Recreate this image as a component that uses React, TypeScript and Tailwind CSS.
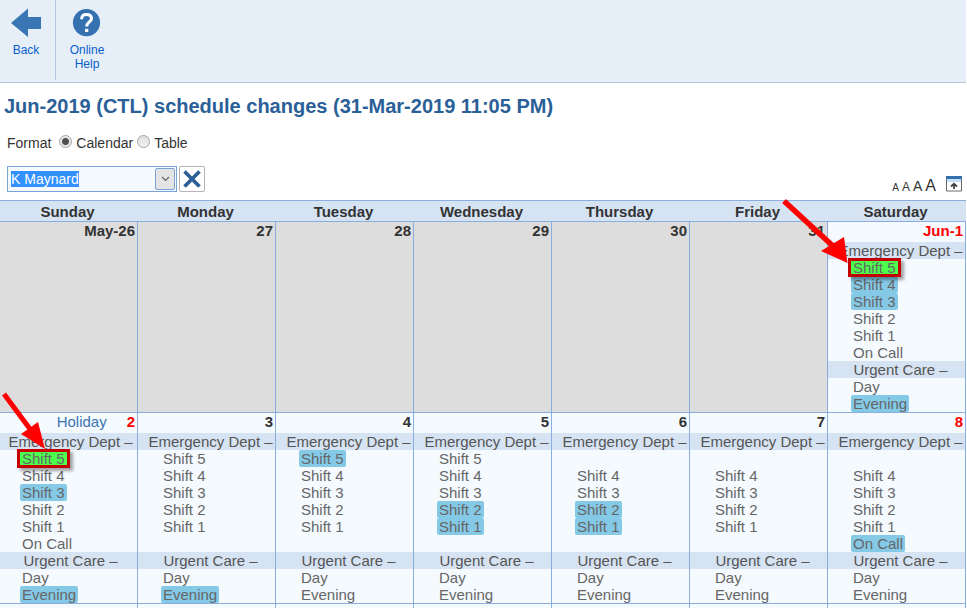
import { useState } from "react";
import { clsx } from "clsx";

type Shift = { name: string; mark?: "blue" | "green"; arrow?: "wide" | "narrow" };

type Day = {
  label: string;
  red?: boolean;
  holiday?: boolean;
  emergency?: Shift[];
  urgent?: Shift[];
};

const weekdays = ["Sunday", "Monday", "Tuesday", "Wednesday", "Thursday", "Friday", "Saturday"];

const emergencyNames = ["Shift 5", "Shift 4", "Shift 3", "Shift 2", "Shift 1", "On Call"];

// An empty name keeps the line so that the rows of a week stay level
function emergency(open: string[], changed: string[] = []): Shift[] {
  return emergencyNames.map((name) => ({
    name: open.includes(name) ? name : "",
    mark: changed.includes(name) ? "blue" : undefined,
  }));
}

function withArrow(shifts: Shift[], arrow: "wide" | "narrow"): Shift[] {
  return shifts.map((shift, index) => (index === 0 ? { ...shift, mark: "green", arrow } : shift));
}

function urgent(eveningChanged = false): Shift[] {
  return [{ name: "Day" }, { name: "Evening", mark: eveningChanged ? "blue" : undefined }];
}

const fiveShifts = emergencyNames.slice(0, 5);
const fourShifts = emergencyNames.slice(1, 5);

const weeks: Day[][] = [
  [
    { label: "May-26" },
    { label: "27" },
    { label: "28" },
    { label: "29" },
    { label: "30" },
    { label: "31" },
    {
      label: "Jun-1",
      red: true,
      emergency: withArrow(emergency(emergencyNames, ["Shift 4", "Shift 3"]), "wide"),
      urgent: urgent(true),
    },
  ],
  [
    {
      label: "2",
      red: true,
      holiday: true,
      emergency: withArrow(emergency(emergencyNames, ["Shift 3"]), "narrow"),
      urgent: urgent(true),
    },
    { label: "3", emergency: emergency(fiveShifts), urgent: urgent(true) },
    { label: "4", emergency: emergency(fiveShifts, ["Shift 5"]), urgent: urgent() },
    { label: "5", emergency: emergency(fiveShifts, ["Shift 2", "Shift 1"]), urgent: urgent() },
    { label: "6", emergency: emergency(fourShifts, ["Shift 2", "Shift 1"]), urgent: urgent() },
    { label: "7", emergency: emergency(fourShifts), urgent: urgent() },
    {
      label: "8",
      red: true,
      emergency: emergency([...fourShifts, "On Call"], ["On Call"]),
      urgent: urgent(),
    },
  ],
];

function Callout({ arrow }: { arrow: "wide" | "narrow" }) {
  return (
    <>
      <span className="absolute -inset-x-[3px] -inset-y-px z-10 border-3 border-[#c40000] shadow-[3px_3px_3px_rgba(0,0,0,0.35)]" />
      {arrow === "wide" ? (
        <svg className="absolute right-full bottom-full z-20 -mb-[5px] mr-[3px]" width="68" height="66" viewBox="0 0 68 66" aria-hidden="true">
          <path d="M4 3 L54 49" stroke="#ff0000" strokeWidth="5.5" />
          <path d="M64 39 L41 53 L67.5 65 Z" fill="#ff0000" />
        </svg>
      ) : (
        <svg className="absolute right-1/2 bottom-full z-20 -mr-0.5" width="44" height="60" viewBox="0 0 44 60" aria-hidden="true">
          <path d="M3 4 L29 39" stroke="#ff0000" strokeWidth="5" />
          <path d="M37 32 L20 44 L44 59 Z" fill="#ff0000" />
        </svg>
      )}
    </>
  );
}

function ShiftList({ shifts }: { shifts: Shift[] }) {
  return (
    <ul>
      {shifts.map((shift, index) => (
        <li key={index} className="flex h-[17px]">
          <span
            className={clsx(
              "relative rounded-xs px-0.5",
              shift.mark === "blue" && "bg-[#84c9e6]",
              shift.mark === "green" && "bg-[#4cff4c]"
            )}
          >
            {shift.name}
            {shift.arrow && <Callout arrow={shift.arrow} />}
          </span>
        </li>
      ))}
    </ul>
  );
}

function DayCell({ day, first }: { day: Day; first: boolean }) {
  const listPadding = first ? "pl-5" : "pl-[23px]";
  const titlePadding = first ? "pl-1" : "pl-2";

  return (
    <td className={clsx("border-r border-b border-[#8aaee0] p-0 align-top", day.emergency ? "bg-[#f5faff]" : "bg-[#dddddd]")}>
      <div className={clsx("flex h-5 items-start justify-end pr-0.5 font-bold", day.red ? "text-[#ff0000]" : "text-[#333333]")}>
        {day.holiday && <span className="mr-5 font-normal text-[#3b73af]">Holiday</span>}
        {day.label}
      </div>
      {day.emergency && day.urgent && (
        <div className="text-[#666666]">
          <h3 className={clsx("bg-[#d6e3f3] text-center whitespace-nowrap text-[#555555]", titlePadding)}>Emergency Dept –</h3>
          <div className={listPadding}>
            <ShiftList shifts={day.emergency} />
          </div>
          <h3 className={clsx("bg-[#d6e3f3] text-center whitespace-nowrap text-[#555555]", titlePadding)}>Urgent Care –</h3>
          <div className={listPadding}>
            <ShiftList shifts={day.urgent} />
          </div>
        </div>
      )}
    </td>
  );
}

export default function App() {
  const [format, setFormat] = useState("Calendar");
  const [person, setPerson] = useState("K Maynard");

  return (
    <div className="h-screen overflow-hidden bg-white pr-px font-['Liberation_Sans',Arial,sans-serif] text-[#333333]">
      {/* Toolbar */}
      <nav className="flex h-[83px] border-b border-[#b4c6de] bg-[#e6eef7] text-xs leading-[14px] text-[#0b5fcc]">
        <a href="#back" className="flex h-20 w-14 flex-col items-center border-r border-[#b4c6de] pt-2 pr-[3px]">
          <svg width="32" height="30" viewBox="0 0 32 30" aria-hidden="true">
            <path d="M1 15 L18 .5 V9 H31 V21 H18 V29 Z" fill="#3b76b4" />
          </svg>
          <span className="mt-[5px]">Back</span>
        </a>
        <a href="#help" className="flex w-[62px] flex-col items-center px-2 pt-2 text-center">
          <svg width="30" height="30" viewBox="0 0 30 30" aria-hidden="true">
            <circle cx="14.5" cy="14.6" r="13.6" fill="#3571b0" />
            <path d="M9.6 11.2 C9.6 7.6 11.7 6.4 14.5 6.4 C17.5 6.4 19.5 7.9 19.5 10.4 C19.5 14 14.7 14 14.7 18.6" fill="none" stroke="#fff" strokeWidth="3" />
            <path d="M13.1 20.8 H16.3 V24 H13.1 Z" fill="#fff" />
          </svg>
          <span className="mt-[5px]">Online Help</span>
        </a>
      </nav>

      <h1 className="px-1 pt-[11px] text-xl leading-6 font-bold text-[#2a5f98]">
        Jun-2019 (CTL) schedule changes (31-Mar-2019 11:05 PM)
      </h1>

      {/* Display format */}
      <fieldset className="mt-[17px] flex h-4 items-center px-[7px] text-sm">
        <span className="mr-2">Format</span>
        {["Calendar", "Table"].map((name) => (
          <label key={name} className="mr-1 flex items-center gap-1">
            <input
              type="radio"
              name="format"
              value={name}
              checked={format === name}
              onChange={() => setFormat(name)}
              className="mb-1 size-[13px] appearance-none rounded-full border border-[#a5a5a5] bg-linear-to-b from-[#e0e0e0] to-[#f2f2f2] checked:bg-[radial-gradient(circle,#505050_3px,#e8e8e8_4px)]"
            />
            {name}
          </label>
        ))}
      </fieldset>

      <div className="mt-[15px] flex h-[34px] items-start justify-between pr-1 pl-[7px]">
        <div className="flex gap-[2px]">
          <div className="flex h-[26px] w-[170px] border border-[#7ba3d8] bg-[#f5faff] p-px">
            <div className="flex min-w-0 flex-1 items-center pl-0.5">
              <input
                aria-label="Staff member"
                value={person}
                onChange={(event) => setPerson(event.target.value)}
                className="h-4 w-[68px] bg-[#3390ff] text-sm leading-4 text-white outline-none"
              />
            </div>
            <button aria-label="Show staff list" className="flex w-5 items-center justify-center rounded-xs border border-[#7ba3d8] bg-[#e4e4e4]">
              <svg width="9" height="6" viewBox="0 0 9 6" aria-hidden="true">
                <path d="M1 1 L4.5 4.5 L8 1" fill="none" stroke="#666" strokeWidth="1.2" />
              </svg>
            </button>
          </div>
          <button aria-label="Clear" className="flex h-[26px] w-[26px] items-center justify-center rounded-xs border border-[#b4b4b4] bg-white">
            <svg width="18" height="18" viewBox="0 0 18 18" aria-hidden="true">
              <path d="M1.5 1.5 L16.5 16.5 M16.5 1.5 L1.5 16.5" stroke="#2a5f98" strokeWidth="3.6" />
            </svg>
          </button>
        </div>

        <div className="flex h-8 items-end">
          <div className="flex items-baseline gap-[3px] leading-4">
            <button className="text-[10px]">A</button>
            <button className="text-xs">A</button>
            <button className="text-sm">A</button>
            <button className="text-base">A</button>
          </div>
          <button aria-label="Pop out" className="mb-1.5 ml-2.5">
            <svg width="16" height="16" viewBox="0 0 16 16" aria-hidden="true">
              <path d="M.5 .5 H15.5 V15 H.5 Z" fill="#fff" stroke="#6a6a6a" />
              <path d="M0 0 H16 V3 H0 Z" fill="#3571b0" />
              <path d="M1 3 H15 V6 H1 Z" fill="#c6e2fa" />
              <path d="M8 13 V8 M5 10.5 L8 7.8 L11 10.5" fill="none" stroke="#444" strokeWidth="1.8" />
            </svg>
          </button>
        </div>
      </div>

      {/* Month grid */}
      <table className="w-full table-fixed border-separate border-spacing-0 border-t border-[#8aaee0] text-[15px] leading-[17px]">
        <thead>
          <tr className="h-[21px]">
            {weekdays.map((weekday) => (
              <th key={weekday} className="border-b border-[#8aaee0] bg-[#d6e3f3] p-0 pr-[3px]">
                {weekday}
              </th>
            ))}
          </tr>
        </thead>
        <tbody>
          {weeks.map((week, row) => (
            <tr key={row}>
              {week.map((day, column) => (
                <DayCell key={day.label} day={day} first={column === 0} />
              ))}
            </tr>
          ))}
          <tr className="h-5">
            {weekdays.map((weekday) => (
              <td key={weekday} className="border-r border-[#8aaee0] bg-[#f5faff]" />
            ))}
          </tr>
        </tbody>
      </table>
    </div>
  );
}
